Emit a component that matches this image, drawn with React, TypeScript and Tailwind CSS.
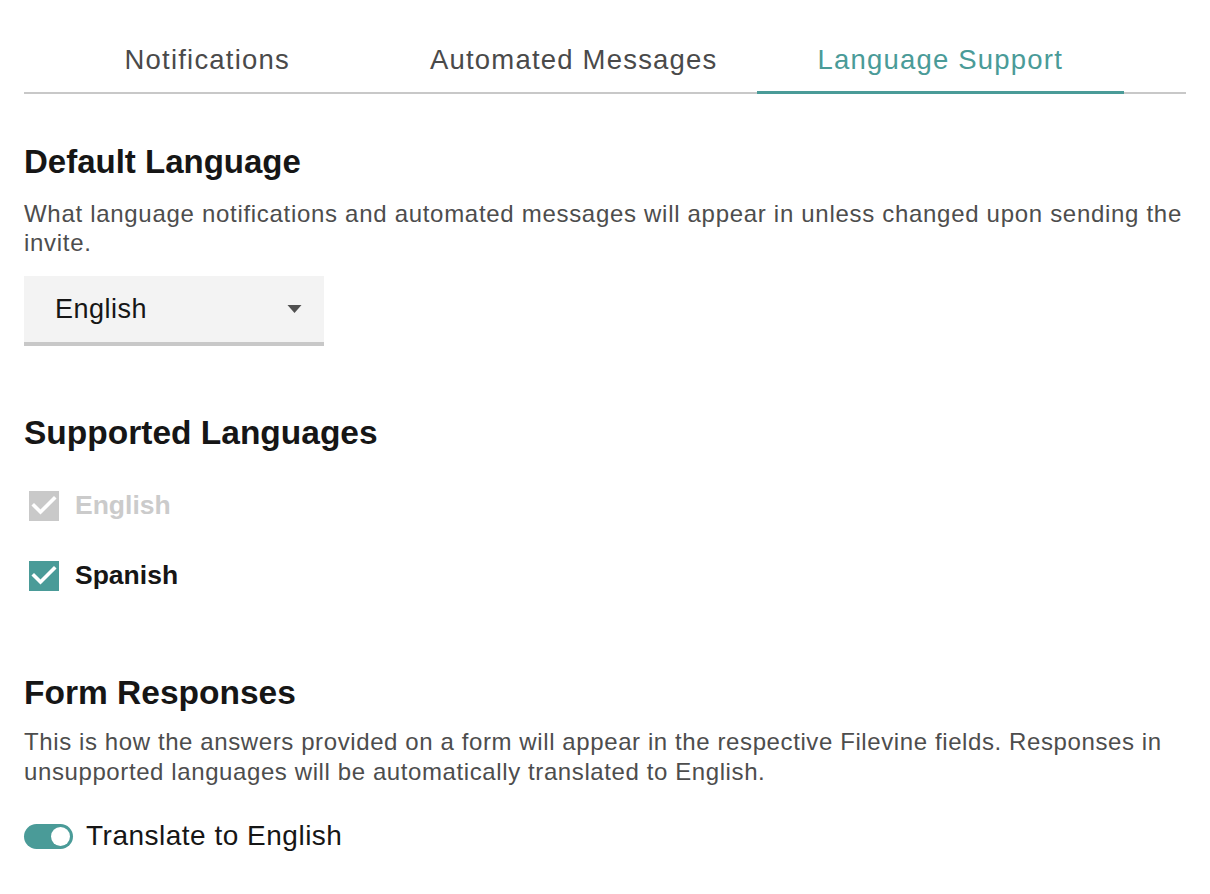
import React, { useState } from "react";

const tabs = ["Notifications", "Automated Messages", "Language Support"];

const CheckIcon = () => (
    <svg viewBox="0 0 30 30" className="w-[30px] h-[30px]" fill="none">
        <path d="M5 14.5l6.5 6.5L25 7.5" stroke="white" strokeWidth="3.6" strokeLinecap="square" />
    </svg>
);

const Checkbox = ({ label, checked, disabled }: { label: string; checked: boolean; disabled?: boolean }) => (
    <label className="flex items-center gap-[16px] h-[30px]">
        <span
            className={`ml-[5px] w-[30px] h-[30px] flex items-center justify-center ${
                disabled ? "bg-[#c9c9c9]" : "bg-[#4a9b98]"
            }`}
        >
            {checked && <CheckIcon />}
        </span>
        <span className={`text-[26.5px] font-bold ${disabled ? "text-[#cbcbcb]" : "text-[#161616]"}`}>{label}</span>
    </label>
);

export default function App() {
    const [active, setActive] = useState(2);
    const [translate, setTranslate] = useState(true);

    return (
        <div className="min-h-screen bg-white px-[24px] pt-[38px] font-['Liberation_Sans',Arial,sans-serif]">
            {/* Tabs */}
            <div className="flex border-b-2 border-[#c8c8c8]">
                {tabs.map((t, i) => (
                    <button
                        key={t}
                        onClick={() => setActive(i)}
                        className={`w-[366.5px] h-[56px] -mb-[2px] pb-[10px] text-[27.5px] tracking-[1.2px] border-b-[3px] ${
                            active === i ? "text-[#4a9b98] border-[#4a9b98]" : "text-[#4a4a4a] border-transparent"
                        }`}
                    >
                        {t}
                    </button>
                ))}
            </div>

            {/* Default Language */}
            <h2 className="mt-[48px] text-[33px] font-bold text-[#161616] leading-[40px]">Default Language</h2>
            <p className="mt-[17px] text-[24px] leading-[29px] tracking-[0.7px] text-[#4d4d4d]">
                What language notifications and automated messages will appear in unless changed upon sending the invite.
            </p>
            <div className="mt-[19px] w-[300px] h-[70px] bg-[#f3f3f3] border-b-[4px] border-[#c8c8c8] flex items-center justify-between pl-[31px] pr-[22px]">
                <span className="text-[27px] text-[#161616] tracking-[0.5px]">English</span>
                <svg viewBox="0 0 14 8" className="w-[15px] h-[8px]">
                    <path d="M0 0h14L7 8z" fill="#505050" />
                </svg>
            </div>

            {/* Supported Languages */}
            <h2 className="mt-[67px] text-[33.5px] font-bold text-[#161616] leading-[40px]">Supported Languages</h2>
            <div className="mt-[38px] flex flex-col gap-[40px]">
                <Checkbox label="English" checked disabled />
                <Checkbox label="Spanish" checked />
            </div>

            {/* Form Responses */}
            <h2 className="mt-[82px] text-[33.5px] font-bold text-[#161616] leading-[40px]">Form Responses</h2>
            <p className="mt-[14px] text-[24px] leading-[30px] tracking-[0.6px] text-[#4d4d4d]">
                This is how the answers provided on a form will appear in the respective Filevine fields. Responses in unsupported languages will be automatically translated to English.
            </p>
            <div className="mt-[28px] flex items-center gap-[13px]">
                <button
                    onClick={() => setTranslate(!translate)}
                    className={`w-[49px] h-[25px] rounded-full flex items-center px-[3px] ${
                        translate ? "bg-[#4a9b98] justify-end" : "bg-[#c8c8c8] justify-start"
                    }`}
                >
                    <span className="w-[19px] h-[19px] rounded-full bg-white" />
                </button>
                <span className="text-[28px] text-[#161616] tracking-[0.5px]">Translate to English</span>
            </div>
        </div>
    );
}
